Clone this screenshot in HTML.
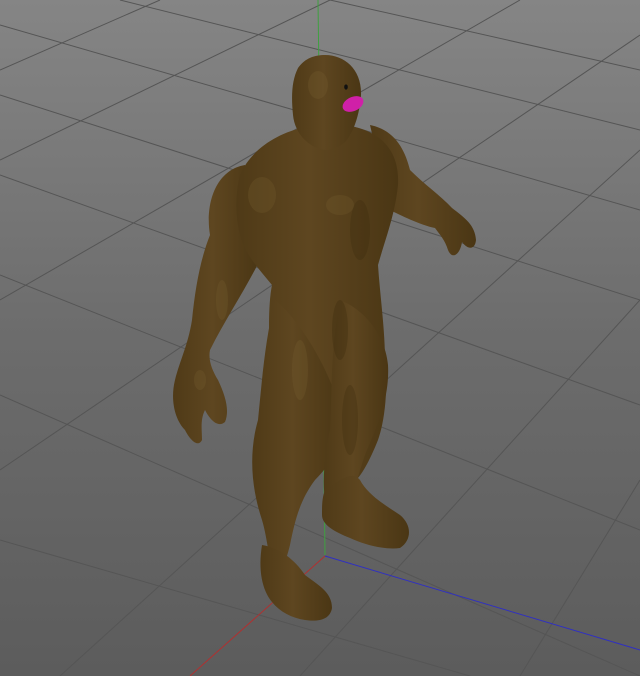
<!DOCTYPE html>
<html><head><meta charset="utf-8"><style>
html,body{margin:0;padding:0;background:#6a6a6a;}
svg{display:block}
</style></head><body>
<svg width="640" height="676" viewBox="0 0 640 676" xmlns="http://www.w3.org/2000/svg">
<defs>
<linearGradient id="bg" x1="0" y1="0" x2="0" y2="1">
<stop offset="0" stop-color="#858585"/><stop offset="0.5" stop-color="#6c6c6c"/><stop offset="1" stop-color="#5c5c5c"/>
</linearGradient>
<linearGradient id="skin" x1="0" y1="0" x2="1" y2="0">
<stop offset="0" stop-color="#4f3a17"/><stop offset="0.45" stop-color="#5e4620"/><stop offset="1" stop-color="#4a3614"/>
</linearGradient>
</defs>
<rect width="640" height="676" fill="url(#bg)"/>
<g stroke="#555" stroke-width="1" fill="none">
<line x1="0" y1="25" x2="640" y2="210"/>
<line x1="0" y1="95" x2="640" y2="300"/>
<line x1="0" y1="175" x2="640" y2="405"/>
<line x1="0" y1="275" x2="640" y2="530"/>
<line x1="0" y1="395" x2="640" y2="676"/>
<line x1="0" y1="540" x2="470" y2="676"/>
<line x1="120" y1="0" x2="640" y2="130"/>
<line x1="330" y1="0" x2="640" y2="70"/>
<line x1="160" y1="0" x2="0" y2="70"/>
<line x1="330" y1="0" x2="0" y2="160"/>
<line x1="520" y1="0" x2="0" y2="300"/>
<line x1="640" y1="35" x2="0" y2="470"/>
<line x1="640" y1="150" x2="60" y2="676"/>
<line x1="640" y1="300" x2="300" y2="676"/>
<line x1="640" y1="480" x2="520" y2="676"/>
</g>
<line x1="318" y1="0" x2="325" y2="555" stroke="#3fa040" stroke-width="1"/>
<line x1="325" y1="556" x2="190" y2="676" stroke="#b03030" stroke-width="1"/>
<line x1="325" y1="556" x2="640" y2="650" stroke="#3030c0" stroke-width="1"/>
<g fill="url(#skin)">
<path d="M245 165 C215 170 205 205 210 235 C200 260 195 290 192 320 C188 345 180 360 175 380 C170 400 175 420 185 430 C190 440 198 448 202 440 C202 430 200 420 205 410 C210 420 218 428 225 422 C230 410 225 395 218 380 C212 370 208 360 210 350 C225 320 245 290 260 260 Z"/>
<path d="M370 125 C395 130 405 150 410 170 C425 185 440 195 452 208 C465 218 475 225 476 240 C475 250 468 250 462 242 C460 255 452 260 448 250 C445 240 440 235 435 228 C420 225 400 215 390 210 Z"/>
<path d="M240 175 C255 140 300 120 345 125 C380 130 400 150 398 185 C395 215 385 240 378 265 C380 295 385 330 385 360 C388 390 385 420 378 440 C370 460 360 480 350 485 L325 470 C300 450 280 420 272 380 C268 340 268 305 272 285 C260 270 245 255 240 235 C235 215 235 195 240 175 Z"/>
<path d="M275 300 C300 320 330 370 340 410 C345 440 335 460 315 480 C300 500 295 520 290 545 C285 565 280 575 275 570 C268 560 268 540 262 520 C252 490 248 455 258 420 C262 380 265 340 275 300 Z"/>
<path d="M262 545 C280 548 295 560 305 575 C318 585 332 592 332 608 C330 620 318 622 305 620 C292 618 280 612 272 602 C262 590 258 570 262 545 Z"/>
<path d="M340 300 C365 310 385 335 388 365 C390 400 375 430 365 455 C358 475 355 490 350 500 L325 500 C322 480 325 450 330 430 C332 400 330 350 340 300 Z"/>
<path d="M325 490 C340 480 352 470 360 480 C368 495 385 505 400 515 C412 525 412 540 400 548 C385 550 365 545 350 538 C335 532 322 525 322 515 C322 505 322 498 325 490 Z"/>
<path d="M325 55 C345 55 362 70 361 95 C360 110 356 125 350 135 C345 145 335 150 325 150 C310 148 295 135 293 115 C291 95 292 80 298 68 C305 58 315 55 325 55 Z"/>
</g>
<g fill="#7a6232" opacity="0.25">
<ellipse cx="318" cy="85" rx="10" ry="14"/>
<ellipse cx="262" cy="195" rx="14" ry="18"/>
<ellipse cx="340" cy="205" rx="14" ry="10"/>
<ellipse cx="300" cy="370" rx="8" ry="30"/>
<ellipse cx="222" cy="300" rx="6" ry="20"/>
<ellipse cx="200" cy="380" rx="6" ry="10"/>
</g>
<g fill="#3a2a0c" opacity="0.3">
<ellipse cx="360" cy="230" rx="10" ry="30"/>
<ellipse cx="340" cy="330" rx="8" ry="30"/>
<ellipse cx="350" cy="420" rx="8" ry="35"/>
</g>
<ellipse cx="353" cy="104" rx="11" ry="7" fill="#d020a8" transform="rotate(-25 353 104)"/>
<ellipse cx="346" cy="87" rx="1.8" ry="2.6" fill="#111"/>
</svg>
</body></html>
